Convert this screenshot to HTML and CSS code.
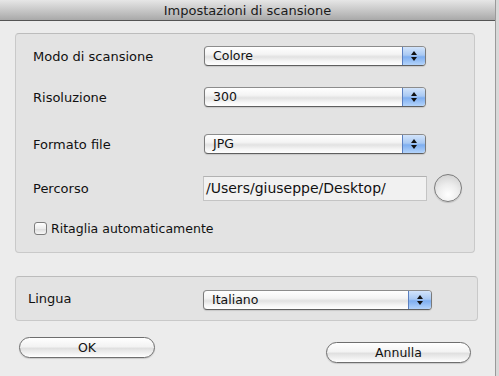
FILE: index.html
```html
<!DOCTYPE html>
<html>
<head>
    <title>Impostazioni di scansione</title>
    <link rel="stylesheet" href="styles.css">
</head>
<body>
    <div class="window">
        <div class="titlebar">Impostazioni di scansione</div>

        <div class="content">
            <div class="group main-group">
                <div class="row row-first">
                    <label class="label">Modo di scansione</label>
                    <div class="popup">
                        <span class="popup-text">Colore</span>
                        <span class="popup-arrows">
                            <svg width="8" height="12" viewBox="0 0 8 12"><path d="M4 1 L7 5 L1 5 Z M1 7 L7 7 L4 11 Z" fill="#111"/></svg>
                        </span>
                    </div>
                </div>

                <div class="row row-res">
                    <label class="label">Risoluzione</label>
                    <div class="popup">
                        <span class="popup-text">300</span>
                        <span class="popup-arrows">
                            <svg width="8" height="12" viewBox="0 0 8 12"><path d="M4 1 L7 5 L1 5 Z M1 7 L7 7 L4 11 Z" fill="#111"/></svg>
                        </span>
                    </div>
                </div>

                <div class="row row-format">
                    <label class="label">Formato file</label>
                    <div class="popup">
                        <span class="popup-text">JPG</span>
                        <span class="popup-arrows">
                            <svg width="8" height="12" viewBox="0 0 8 12"><path d="M4 1 L7 5 L1 5 Z M1 7 L7 7 L4 11 Z" fill="#111"/></svg>
                        </span>
                    </div>
                </div>

                <div class="row row-path">
                    <label class="label">Percorso</label>
                    <div class="path-wrap">
                        <div class="textfield">/Users/giuseppe/Desktop/</div>
                        <button class="round-btn"></button>
                    </div>
                </div>

                <div class="row row-check">
                    <span class="checkbox"></span>
                    <span class="check-label">Ritaglia automaticamente</span>
                </div>
            </div>

            <div class="group lang-group">
                <label class="label lang-label">Lingua</label>
                <div class="popup lang-popup">
                    <span class="popup-text">Italiano</span>
                    <span class="popup-arrows">
                        <svg width="8" height="12" viewBox="0 0 8 12"><path d="M4 1 L7 5 L1 5 Z M1 7 L7 7 L4 11 Z" fill="#111"/></svg>
                    </span>
                </div>
            </div>

            <div class="buttons">
                <button class="push-btn ok-btn">OK</button>
                <button class="push-btn cancel-btn">Annulla</button>
            </div>
        </div>
    </div>
</body>
</html>
```

FILE: styles.css
```css
body {
    margin: 0;
    background-color: #d8d8d8;
    font-family: "DejaVu Sans", Verdana, sans-serif;
    font-size: 12px;
    color: #111;
}

.window {
    width: 495px;
    height: 376px;
    background-color: #ececec;
    border-right: 1px solid #9a9a9a;
}

.titlebar {
    height: 20px;
    line-height: 21px;
    text-align: center;
    font-size: 13px;
    color: #1a1a1a;
    background: linear-gradient(#e6e6e6, #c2c2c2 60%, #a9a9a9);
    border-bottom: 1px solid #555;
}

.content {
    padding: 12px 0 0 15px;
}

.group {
    width: 460px;
    background-color: #e3e3e3;
    border: 1px solid #c9c9c9;
    border-top-color: #bcbcbc;
    border-radius: 4px;
}

.main-group {
    padding: 12px 0 0 17px;
    box-sizing: border-box;
    height: 220px;
}

.row {
    display: flex;
    align-items: center;
}

.label {
    width: 171px;
    font-size: 13px;
}

.row-res {
    margin-top: 21px;
}

.row-format {
    margin-top: 27px;
}

.row-path {
    margin-top: 20px;
}

.row-check {
    margin-top: 19px;
}

/* aqua style popup */
.popup {
    width: 222px;
    height: 20px;
    box-sizing: border-box;
    display: flex;
    border: 1px solid #7a7a7a;
    border-top-color: #8c8c8c;
    border-bottom-color: #5f5f5f;
    border-radius: 4px;
    background: linear-gradient(#ffffff, #f4f4f4 40%, #e2e2e2 55%, #f6f6f6 80%, #ffffff);
    box-shadow: 0 1px 1px rgba(0, 0, 0, 0.12);
    overflow: hidden;
}

.popup-text {
    flex: 1;
    padding-left: 8px;
    line-height: 18px;
    font-size: 12.5px;
}

.popup-arrows {
    width: 22px;
    display: flex;
    align-items: center;
    justify-content: center;
    border-left: 1px solid #5a7fc0;
    background: linear-gradient(#d2e4fb, #a9c9f3 45%, #7eaef0 55%, #b4d4fb);
}

.path-wrap {
    display: flex;
    align-items: center;
    margin-left: -1px;
}

.textfield {
    width: 224px;
    height: 25px;
    box-sizing: border-box;
    border: 1px solid #c4c4c4;
    border-top-color: #b2b2b2;
    background-color: #f1f1f1;
    padding-left: 2px;
    line-height: 22px;
    font-size: 14px;
}

.round-btn {
    width: 28px;
    height: 28px;
    margin-left: 7px;
    border-radius: 50%;
    border: 1px solid #7c7c7c;
    background: radial-gradient(circle at 50% 75%, #ffffff, #ececec 45%, #c9c9c9 100%);
    box-shadow: 0 1px 1px rgba(0, 0, 0, 0.15);
    padding: 0;
}

.checkbox {
    width: 13px;
    height: 13px;
    box-sizing: border-box;
    border: 1px solid #7d7d7d;
    border-radius: 3px;
    background: linear-gradient(#ffffff, #ececec 50%, #dcdcdc 55%, #f8f8f8);
    margin-left: 1px;
}

.check-label {
    margin-left: 4px;
    font-size: 12.5px;
}

.lang-group {
    margin-top: 23px;
    height: 45px;
    box-sizing: border-box;
    padding-left: 12px;
    display: flex;
    align-items: center;
    width: 463px;
}

.lang-label {
    width: 175px;
}

.lang-popup {
    width: 229px;
    margin-top: 2px;
}

.buttons {
    display: flex;
    justify-content: space-between;
    align-items: flex-start;
    width: 452px;
    margin-top: 16px;
    padding-left: 4px;
}

.push-btn {
    height: 21px;
    border: 1px solid #6e6e6e;
    border-radius: 11px;
    background: linear-gradient(#ffffff, #f3f3f3 45%, #e0e0e0 55%, #f4f4f4 85%, #ffffff);
    box-shadow: 0 1px 1px rgba(0, 0, 0, 0.15);
    font-family: "DejaVu Sans", Verdana, sans-serif;
    font-size: 12.5px;
    color: #111;
    padding: 0;
}

.ok-btn {
    width: 136px;
}

.cancel-btn {
    width: 145px;
    margin-top: 5px;
}
```
